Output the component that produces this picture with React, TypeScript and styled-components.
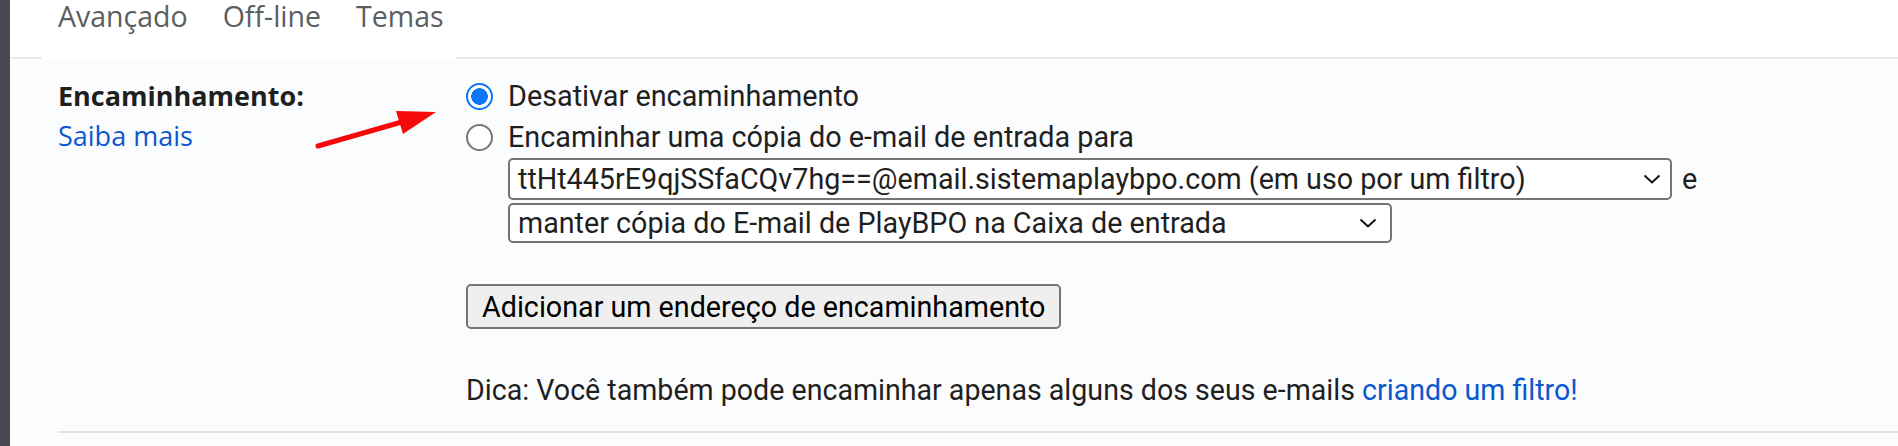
import React from 'react'
import styled, { createGlobalStyle } from 'styled-components'

const GlobalStyle = createGlobalStyle`
	html, body {
		margin: 0;
		padding: 0;
		background: #fbfcfd;
	}
	body {
		font-family: Roboto, 'Noto Sans', sans-serif;
		color: #1f1f1f;
	}
`

const Page = styled.div`
	position: relative;
	display: flex;
	height: 446px;
	overflow: hidden;
`

const Strip = styled.div`
	width: 10px;
	flex-shrink: 0;
	background: #4a4853;
`

const Main = styled.div`
	flex: 1;
	display: flex;
	flex-direction: column;
	background: #fbfcfd;
`

const TabBar = styled.div`
	display: flex;
	height: 59px;
	background: #fff;
`

const TabEdge = styled.div<{ $grow?: boolean }>`
	width: 32px;
	flex: ${p => (p.$grow ? 1 : 'none')};
	border-bottom: 2px solid #e8eaed;
`

const TabGroup = styled.div`
	width: 414px;
	display: flex;
	gap: 35px;
	padding: 2px 0 0 16px;
	box-sizing: border-box;
`

const Tab = styled.span`
	font-family: 'Open Sans', sans-serif;
	font-size: 28.5px;
	line-height: 28px;
	height: 30px;
	color: #5b5e63;
	white-space: nowrap;
`

const Section = styled.div`
	padding-left: 48px;
`

const Row = styled.div`
	display: flex;
	height: 374px;
	box-sizing: border-box;
	padding-top: 17px;
	border-bottom: 2px solid #e2e2e2;
`

const LabelCol = styled.div`
	width: 408px;
	flex-shrink: 0;
	display: flex;
	flex-direction: column;
	font-family: 'Open Sans', sans-serif;
	font-size: 27px;
	line-height: 40px;
`

const Label = styled.span`
	font-weight: 700;
	color: #1f1f1f;
`

const Link = styled.a`
	color: #0b57d0;
	text-decoration: none;
	cursor: pointer;
`

const Content = styled.div`
	display: flex;
	flex-direction: column;
	font-size: 28.8px;
	line-height: 41px;
`

const Option = styled.label`
	display: flex;
	align-items: center;
	gap: 15px;
	white-space: nowrap;
`

const Radio = styled.input.attrs({ type: 'radio' })`
	appearance: none;
	margin: 0;
	width: 27px;
	height: 27px;
	border-radius: 50%;
	box-sizing: border-box;
	border: 2px solid #767676;
	background: #fff;
	flex-shrink: 0;

	&:checked {
		border: 2.5px solid #0a76f6;
		background: radial-gradient(circle, #0a76f6 0 8px, #fff 8.6px);
	}
`

const SelectLine = styled.div<{ $top: number }>`
	display: flex;
	align-items: center;
	gap: 10px;
	margin-left: 42px;
	margin-top: ${p => p.$top}px;
`

const SelectBox = styled.div<{ $w: number; $h: number }>`
	position: relative;
	display: flex;
	align-items: center;
	width: ${p => p.$w}px;
	height: ${p => p.$h}px;
	box-sizing: border-box;
	padding-left: 8px;
	border: 2px solid #747474;
	border-radius: 5px;
	background: #fff;
	font-size: 28.7px;
	line-height: 1;
	white-space: nowrap;

	svg {
		position: absolute;
		right: ${p => (p.$w > 1000 ? 9 : 13)}px;
		top: 50%;
		transform: translateY(-50%);
	}
`

const Button = styled.button`
	align-self: flex-start;
	margin-top: 41px;
	height: 45px;
	padding: 0 14px;
	font-family: Roboto, sans-serif;
	font-size: 28.7px;
	color: #000;
	background: #efefef;
	border: 2px solid #767676;
	border-radius: 5px;
`

const Tip = styled.p`
	margin: 46px 0 0;
	font-size: 28.6px;
	line-height: 30px;
	white-space: nowrap;
`

const Arrow = styled.svg`
	position: absolute;
	left: 300px;
	top: 95px;
`

const Chevron = () => (
	<svg width='18' height='10' viewBox='0 0 18 10'>
		<path d='M1.5 1.5 L9 8.5 L16.5 1.5' fill='none' stroke='#111' strokeWidth='2' />
	</svg>
)

const App: React.FC = () => {
	return (
		<>
			<GlobalStyle />
			<Page>
				<Strip />
				<Main>
					<TabBar>
						<TabEdge />
						<TabGroup>
							<Tab>Avançado</Tab>
							<Tab>Off-line</Tab>
							<Tab>Temas</Tab>
						</TabGroup>
						<TabEdge $grow />
					</TabBar>
					<Section>
						<Row>
							<LabelCol>
								<Label>Encaminhamento:</Label>
								<Link>Saiba mais</Link>
							</LabelCol>
							<Content>
								<Option>
									<Radio name='fwd' defaultChecked />
									Desativar encaminhamento
								</Option>
								<Option>
									<Radio name='fwd' />
									Encaminhar uma cópia do e-mail de entrada para
								</Option>
								<SelectLine $top={0}>
									<SelectBox $w={1164} $h={42}>
										ttHt445rE9qjSSfaCQv7hg==@email.sistemaplaybpo.com (em uso por um filtro)
										<Chevron />
									</SelectBox>
									e
								</SelectLine>
								<SelectLine $top={3}>
									<SelectBox $w={884} $h={40}>
										manter cópia do E-mail de PlayBPO na Caixa de entrada
										<Chevron />
									</SelectBox>
								</SelectLine>
								<Button>Adicionar um endereço de encaminhamento</Button>
								<Tip>
									Dica: Você também pode encaminhar apenas alguns dos seus e-mails{' '}
									<Link>criando um filtro!</Link>
								</Tip>
							</Content>
						</Row>
					</Section>
				</Main>
				<Arrow width='150' height='65' viewBox='0 0 150 65'>
					<line x1='18' y1='51' x2='100' y2='27.5' stroke='#f50a0a' strokeWidth='5' strokeLinecap='round' />
					<polygon points='136,17 96,16 103,39' fill='#f50a0a' />
				</Arrow>
			</Page>
		</>
	)
}

export default App
